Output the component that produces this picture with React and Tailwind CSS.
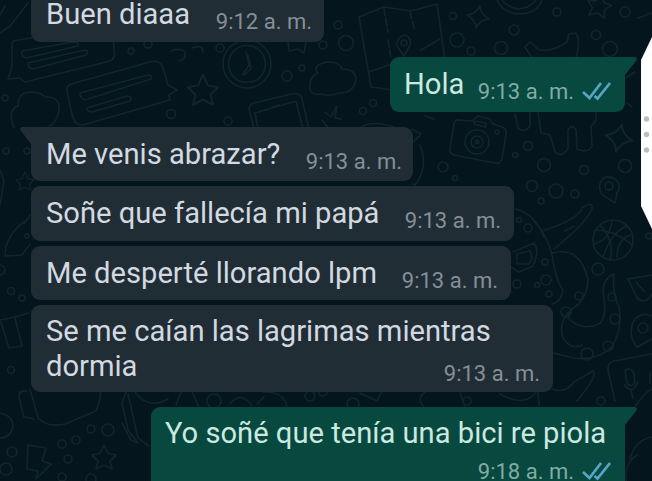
const STAR = "M0-13L4-4.500L12-3L6 3L8 11L0 7L-8 11L-6 3L-12-3L-4-4.500Z";
const SPARK = "M0-11Q2-3 11 0Q2 3 0 11Q-2 3-11 0Q-2-3 0-11Z";

const RINGS = [
  [5, 98, 3], [131, 51, 3], [148, 44, 4], [171, 114, 4.5], [338, 25, 4], [346, 43, 7.5], [323, 45, 4], [287, 76, 5], [302, 68, 3],
  [363, 111, 3.5], [373, 103, 3.500], [220, 48, 4], [228, 121, 4], [453, 16, 3.5], [457, 40, 7], [471, 51, 4], [514, 30, 5], [501, 48, 6.5],
  [557, 12, 4], [625, 12, 5], [596, 35, 4.5], [610, 49, 7.500], [6, 151, 3], [27, 151, 3], [443, 167, 5], [455, 178, 2.500], [528, 146, 4.5],
  [515, 155, 2.500], [544, 165, 6.500], [584, 170, 4.5], [625, 166, 6.500], [532, 186, 5.500], [556, 191, 7], [575, 194, 4], [541, 201, 3],
  [528, 228, 4], [519, 220, 2.5], [598, 269, 6], [546, 280, 5], [537, 285, 2.500], [549, 294, 3], [517, 284, 4], [545, 262, 3], [11, 291, 3.500], [22, 298, 3],
  [11, 370, 3.500], [108, 430, 6], [91, 429, 4], [76, 440, 4], [62, 444, 4], [68, 459, 4], [12, 452, 5], [6, 469, 6], [62, 477, 4], [91, 479, 5],
  [214, 401, 7], [310, 396, 5], [323, 392, 4], [353, 404, 6], [467, 401, 4], [601, 401, 4], [0, 270, 5], [649, 236, 3], [27, 236, 2],
];

function Doodles() {
  return (
    <svg className="absolute inset-0 h-[481px] w-[652px]" viewBox="0 0 652 481" fill="none" stroke="#13252c" strokeWidth="1.600" strokeLinejoin="round" strokeLinecap="round">
      {RINGS.map(([x, y, r], i) => <circle key={i} cx={x} cy={y} r={r} />)}
      {/* speech cards */}
      <path d="M12 43Q13 40 18 40L108 25Q113 25 114 50Q116 58 110 61L25 82L20 78L8 79L12 67Z" />
      <path d="M22 51L73 42Q79 42 78 46L26 58Q21 56 22 51ZM28 63L85 50Q90 51 86 55L33 69Q28 68 28 63Z" />
      <path d="M71 84L150 62Q160 59 163 68L168 85L177 90L169 95L170 100L83 125Q75 125 73 118L67 92Q66 86 71 84Z" />
      <path d="M80 93L148 75Q153 75 151 79L85 100Q80 98 80 93ZM87 108L127 96Q133 96 130 101L92 112Q87 112 87 108Z" />
      <path d="M14 128Q7 110 18 106Q18 91 33 92Q42 93 45 97Q60 96 59 110Q57 123 48 127M0 33L10 26L28 3M0 15L5 6" />
      <path d="M171 51Q180 47 185 52Q186 60 179 61M192 48Q203 44 203 52" />
      <path d={STAR} transform="translate(203 91) scale(1.250)" />
      <circle cx="247" cy="64" r="24" /><circle cx="247" cy="64" r="18.500" />
      <path d="M246 52L249 65L243 74M248 55L251 69L244 75M288 42L289 51L298 49L304 53L306 42" />
      <path d="M316 70Q315 64 328 62Q340 62 342 69Q356 69 356 80Q353 94 338 93Q331 97 321 94Q308 96 310 84Q311 75 318 73Z" />
      <path d="M254 129L249 109Q250 104 254 103L292 94Q300 92 302 99L309 129M258 129L255 113L296 101L303 129M272 107L279 105M325 112L331 117L337 106L335 118L341 119M328 127L322 120M358 129Q372 118 399 129" />
      {/* folded map */}
      <path d="M359 17L384 7L411 11L437 4L445 60M359 17L371 87L400 91M369 72L392 64M421 50L440 39" />
      <path d="M384 9L388 32M388 40L391 59M410 12L415 31" strokeDasharray="7 3" />
      <path d="M404 35Q412 37 410 45L404 56L397 46Q396 38 404 35Z" /><circle cx="404" cy="43" r="3" />
      <path d={SPARK} transform="translate(478 17) rotate(10)" />
      <path d="M497 0Q503 13 519 14Q537 14 542 0M502 0Q508 8 519 9Q530 8 536 0M133-3Q137 3 142 0" />
      <path d={STAR} transform="translate(599 6) rotate(12)" />
      <path d="M532 58L525 47L530 42L539 50Q553 52 567 42L569 34L576 33Q581 42 576 57M638 18L652 13" />
      {/* camera */}
      <path d="M459 120L472 121L478 116L490 119L493 124L502 127Q507 129 506 134L502 159Q500 164 495 163L454 155Q449 153 450 149L454 124Q455 119 459 120Z" />
      <circle cx="477" cy="142" r="12" /><circle cx="477" cy="142" r="6" /><circle cx="477" cy="142" r="1.5" /><circle cx="497" cy="132" r="2" />
      <path d="M474 121L486 123L486 127L474 124ZM515 114L518 128Q524 134 530 126L530 111M538 112L541 133L550 135L555 152Q561 158 568 149L568 130Q572 123 576 130L577 149Q588 154 592 146L591 126L596 121M596 111L596 121" />
      <path d="M412 129L421 134L413 142M420 145Q429 167 415 185L413 184" />
      <path d={SPARK} transform="translate(619 138) rotate(12) scale(1.250)" />
      <path d="M603 178Q610 175 616 180Q622 186 617 193L615 203L603 195Q596 188 603 178Z" /><circle cx="609" cy="186" r="4" />
      <path d={STAR} transform="translate(25 182) scale(.75)" />
      <path d="M0 170L4 181L0 205M28 219Q5 234 5 256L22 255L30 244M30 215L24 224" />
      <path d="M516 209Q536 215 544 237M542 231Q578 220 583 207Q593 201 592 209Q586 223 554 249M565 231L574 226" />
      <circle cx="613" cy="240" r="20" />
      <path d="M600 225Q615 240 610 260M612 220Q610 240 594 244M595 230Q617 231 632 245M627 226Q612 231 603 257M617 257Q617 240 630 235" />
      {/* winding figures along the right margin */}
      <path d="M534 221Q547 235 552 255Q556 281 563 290Q561 302 552 304M552 253Q581 246 588 280Q588 293 579 304Q564 313 570 320Q583 331 599 324Q608 318 603 292Q603 278 614 274Q612 293 619 307Q623 328 612 347Q597 361 574 358L553 353M570 311Q558 322 563 338Q572 351 582 345" />
      <circle cx="566" cy="312" r="5" /><circle cx="579" cy="296" r="4" /><circle cx="612" cy="297" r="4" /><circle cx="615" cy="319" r="5" /><circle cx="587" cy="354" r="6" /><circle cx="608" cy="346" r="5" />
      <path d="M513 252L534 243Q540 251 533 266L519 272L511 267M517 254L530 251Q534 258 529 264L517 264Z" />
      <path d="M628 279L652 275M628 279L637 298Q646 305 652 294M636 282L645 292M637 347Q628 337 633 322Q640 311 652 316M637 347L652 339" /><circle cx="643" cy="328" r="5" />
      <path d="M652 354L614 361Q607 363 608 370L615 401M552 389Q566 394 574 382L593 371Q597 374 587 388L577 401M625 371Q630 366 634 373L635 383Q630 388 627 383ZM624 384Q632 396 638 382M631 391L633 398M650 373L650 383" />
      {/* lower-left objects */}
      <path d="M0 320Q17 317 28 313M1 322L9 348L22 346L15 318M27 391Q16 390 20 401L24 417L34 419M30 389L38 418Q48 428 65 424L96 411Q103 392 99 391M126 392L122 403L128 430L138 443L131 440L122 423M128 394L138 438L149 446M0 413Q13 416 13 426Q11 438 0 438" />
      <path d="M28 445L46 448L42 461L51 464L36 479L38 471L27 469Z" />
      <path d={STAR} transform="translate(104 458)" />
      <path d="M135 392Q148 410 168 399M176 405L181 392M192 392L199 407M230 404Q241 390 252 406M257 404L264 397M263 392Q284 391 287 407M360 393L377 401L381 393M425 392Q416 398 424 407M460 393L465 407M635 407Q646 391 652 389M630 459Q635 440 652 437M626 481Q624 463 637 455M538 392L539 406" />
      <path d="M500 394Q525 408 536 392M626 78L635 72M627 103L632 107M425 116L434 119" />
    </svg>
  );
}

function Ticks() {
  return (
    <svg className="-mt-[3px] ml-[7px] h-5 w-[31px] shrink-0" viewBox="0 0 31 20" fill="none" stroke="#57a5c6" strokeWidth="2.700">
      <path d="M2 11L8.500 17L20 2M13.500 15L16.500 17.500L29 2" />
    </svg>
  );
}

function Time({ children, sent }) {
  return (
    <span className={`flex h-[26px] shrink-0 items-center whitespace-nowrap text-[22px] leading-[26px] ${sent ? "text-[#82aba5]" : "text-[#858f98]"}`}>
      {children}
      {sent && <Ticks />}
    </span>
  );
}

function Tail({ sent }) {
  return sent ? (
    <svg className="absolute -right-[12px] top-0 h-[22px] w-[24px]" viewBox="0 0 24 22"><path d="M0 0H22Q25 1 23 4L12 18V22H0Z" fill="#07483f" /></svg>
  ) : (
    <svg className="absolute -left-[11px] top-0 h-[22px] w-[24px]" viewBox="0 0 24 22"><path d="M24 0H2Q-1 1 1 4L11 17V22H24Z" fill="#212d35" /></svg>
  );
}

function Bubble({ className, sent, tail, children }) {
  return (
    <div className={`relative flex shrink-0 justify-between rounded-[9px] whitespace-nowrap text-[29.15px] leading-[34px] ${sent ? "self-end bg-[#07483f] text-[#cce9e0]" : "bg-[#212d35] text-[#d3d9e0]"} ${className}`}>
      {tail && <Tail sent={sent} />}
      {children}
    </div>
  );
}

export default function App() {
  return (
    <main className="relative h-[481px] w-[652px] overflow-hidden bg-[#04151d] font-['Roboto','Liberation_Sans',sans-serif]">
      <Doodles />
      <section className="relative flex h-[481px] flex-col items-start overflow-hidden pl-[31px] pr-[27px]">
        <Bubble className="-mt-[13px] h-[55px] w-[293px] pl-[15px] pr-[12px] pt-[10px]">
          <p>Buen diaaa</p>
          <div className="pt-3"><Time>9:12 a. m.</Time></div>
        </Bubble>
        <Bubble sent tail className="mt-[15px] h-[55px] w-[235px] pl-[14px] pr-[13px] pt-[10px]">
          <p>Hola</p>
          <div className="pt-3"><Time sent>9:13 a. m.</Time></div>
        </Bubble>
        <Bubble tail className="mt-[15px] h-[54px] w-[382px] pl-[15px] pr-[11px] pt-[10px]">
          <p>Me venis abrazar?</p>
          <div className="pt-3"><Time>9:13 a. m.</Time></div>
        </Bubble>
        <Bubble className="mt-[5px] h-[55px] w-[483px] pl-[15px] pr-[13px] pt-[10px]">
          <p>Soñe que fallecía mi papá</p>
          <div className="pt-3"><Time>9:13 a. m.</Time></div>
        </Bubble>
        <Bubble className="mt-[5px] h-[54px] w-[480px] pl-[15px] pr-[13px] pt-[10px]">
          <p>Me desperté llorando lpm</p>
          <div className="pt-3"><Time>9:13 a. m.</Time></div>
        </Bubble>
        <Bubble className="mt-[5px] h-[87px] w-[522px] pl-[15px] pt-[9px]">
          <p className="w-[450px] shrink-0 leading-[35px]">Se me caían las lagrimas mientras<br />dormia</p>
          <div className="-ml-[60px] mr-[13px] pt-[47px]"><Time>9:13 a. m.</Time></div>
        </Bubble>
        <Bubble sent tail className="mt-[15px] h-[90px] w-[474px] flex-col !justify-start pl-[14px] pr-[13px] pt-[9px]">
          <p>Yo soñé que tenía una bici re piola</p>
          <div className="mt-[9px] flex justify-end"><Time sent>9:18 a. m.</Time></div>
        </Bubble>
      </section>
      <svg className="absolute right-0 top-[37px] h-[192px] w-[12px]" viewBox="0 0 12 192">
        <path d="M12 0L1 23V169L12 192Z" fill="#fff" />
        <g fill="#bcbcbc"><circle cx="6.500" cy="82" r="2.700" /><circle cx="6.500" cy="97.500" r="2.700" /><circle cx="6.500" cy="113" r="2.700" /></g>
      </svg>
    </main>
  );
}
